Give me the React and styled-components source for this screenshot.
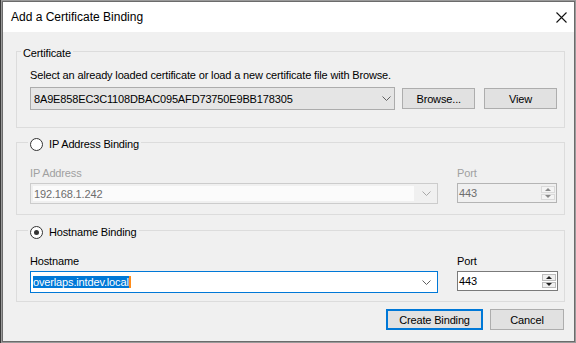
import styled, { createGlobalStyle } from "styled-components";

const GlobalStyle = createGlobalStyle`
  html, body {
    margin: 0;
    background: #8a8a8a;
  }
  body {
    font-family: "Liberation Sans", Arial, sans-serif;
    font-size: 11px;
    letter-spacing: -0.15px;
    color: #000;
  }
`;

const Desk = styled.div`
  width: 576px;
  height: 343px;
  padding: 1px 0 0 2px;
  box-sizing: border-box;
  background: linear-gradient(90deg, #3a3a3a 0 1px, #9a9a9a 1px);
  overflow: hidden;
`;

const Window = styled.div`
  width: 573px;
  height: 341px;
  box-sizing: border-box;
  border: 1px solid #6b6b6b;
  display: flex;
  flex-direction: column;
  background: #f0f0f0;
`;

const TitleBar = styled.div`
  height: 30px;
  background: #fff;
  display: flex;
  align-items: center;
  justify-content: space-between;
  padding: 0 7px 0 8px;
  font-size: 12px;
  letter-spacing: 0;
`;

const Body = styled.div`
  flex: 1;
  display: flex;
  flex-direction: column;
  padding: 10px 9px 0 13px;
`;

const Group = styled.fieldset`
  margin: 0 0 ${(p) => p.$gap || 0}px 0;
  padding: 0 7px ${(p) => p.$bottom}px 13px;
  border: 1px solid #dcdcdc;
  min-width: 0;
`;

const Legend = styled.legend`
  margin-left: ${(p) => p.$indent}px;
  padding: ${(p) => p.$drop || 0}px 2px 0 2px;
  line-height: 14px;
  display: flex;
  align-items: center;
  gap: 6px;
`;

const Radio = styled.span`
  width: 11px;
  height: 11px;
  border: 1px solid #333;
  border-radius: 50%;
  background: #fff;
  display: inline-flex;
  align-items: center;
  justify-content: center;

  &::after {
    content: "";
    width: 5px;
    height: 5px;
    border-radius: 50%;
    background: ${(p) => (p.$checked ? "#333" : "transparent")};
  }
`;

const Hint = styled.div`
  line-height: 14px;
  margin: ${(p) => p.$top}px 0 5px;
`;

const CertRow = styled.div`
  display: flex;
  align-items: center;
  gap: 7px;
`;

const Combo = styled.div`
  box-sizing: border-box;
  width: ${(p) => p.$w}px;
  height: ${(p) => p.$h}px;
  border: 1px solid ${(p) => p.$border};
  background: ${(p) => p.$bg};
  display: flex;
  align-items: center;
  padding: ${(p) => p.$pad || "0 0 0 3px"};
  color: ${(p) => p.$color || "#000"};
`;

const InnerField = styled.div`
  flex: 1;
  align-self: stretch;
  margin: 2px 0;
  background: #fbfbfb;
  display: flex;
  align-items: center;
  padding-left: 1px;
`;

const ComboText = styled.span`
  flex: 1;
  white-space: nowrap;
  overflow: hidden;
`;

const Chevron = styled.svg`
  width: 9px;
  height: 5px;
  margin: 0 ${(p) => p.$right}px 0 8px;
  flex: none;
`;

const Button = styled.button`
  box-sizing: border-box;
  width: ${(p) => p.$w}px;
  height: ${(p) => p.$h || 21}px;
  margin-left: ${(p) => p.$ml || 0}px;
  font: inherit;
  letter-spacing: inherit;
  color: #000;
  background: #e1e1e1;
  border: ${(p) => (p.$default ? "2px solid #0078d7" : "1px solid #adadad")};
  padding: 0;
`;

const FieldGrid = styled.div`
  display: grid;
  grid-template-columns: 408px ${(p) => p.$port}px;
  column-gap: 19px;
  row-gap: 3px;
  margin-top: ${(p) => p.$top}px;
`;

const Label = styled.div`
  line-height: 14px;
  color: ${(p) => (p.$disabled ? "#a0a0a0" : "#000")};
`;

const Spin = styled.div`
  box-sizing: border-box;
  height: ${(p) => p.$h}px;
  border: 1px solid ${(p) => (p.$disabled ? "#b4b4b4" : "#7a7a7a")};
  background: ${(p) => (p.$disabled ? "#f0f0f0" : "#fff")};
  display: flex;
  align-items: center;
  padding-left: 1px;
  color: ${(p) => (p.$disabled ? "#6d6d6d" : "#000")};
`;

const SpinButtons = styled.div`
  width: 14px;
  align-self: stretch;
  margin: 2px 1px 2px auto;
  display: flex;
  flex-direction: column;
  gap: 1px;
`;

const SpinArrow = styled.div`
  flex: 1;
  background: ${(p) => (p.$disabled ? "#f4f4f4" : "#f0f0f0")};
  border: 1px solid ${(p) => (p.$disabled ? "#dadada" : "#bcbcbc")};
  display: flex;
  align-items: center;
  justify-content: center;

  &::after {
    content: "";
    border-left: 3px solid transparent;
    border-right: 3px solid transparent;
    ${(p) => (p.$down ? "border-top" : "border-bottom")}: 3px solid
      ${(p) => (p.$disabled ? "#8a8a8a" : "#222")};
  }
`;

const Selected = styled.span`
  background: #0078d7;
  color: #fff;
  line-height: 14px;
  border-right: 2px solid #ff8c1a;
`;

const Actions = styled.div`
  display: flex;
  justify-content: flex-end;
  gap: 7px;
  margin: 0 1px 0 0;
`;

const ChevronIcon = ({ right = 5, color = "#606060" }) => (
  <Chevron $right={right} viewBox="0 0 9 5">
    <path d="M0.5 0.5 L4.5 4.5 L8.5 0.5" fill="none" stroke={color} strokeWidth="1" />
  </Chevron>
);

const CloseIcon = () => (
  <svg width="11" height="11" viewBox="0 0 11 11">
    <path d="M0.5 0.5 L10.5 10.5 M10.5 0.5 L0.5 10.5" stroke="#111" strokeWidth="1.1" />
  </svg>
);

const PortSpin = ({ disabled, h }) => (
  <Spin $disabled={disabled} $h={h}>
    443
    <SpinButtons>
      <SpinArrow $disabled={disabled} />
      <SpinArrow $disabled={disabled} $down />
    </SpinButtons>
  </Spin>
);

export default function App() {
  return (
    <>
      <GlobalStyle />
      <Desk>
        <Window>
          <TitleBar>
            <span>Add a Certificate Binding</span>
            <CloseIcon />
          </TitleBar>
          <Body>
            <Group $bottom={17} $gap={6}>
              <Legend $indent={-9} $drop={4}>Certificate</Legend>
              <Hint $top={8}>
                Select an already loaded certificate or load a new certificate file with Browse.
              </Hint>
              <CertRow>
                <Combo $w={366} $h={23} $border="#acacac" $bg="#e5e5e5">
                  <ComboText>8A9E858EC3C1108DBAC095AFD73750E9BB178305</ComboText>
                  <ChevronIcon right={3} />
                </Combo>
                <Button $w={73}>Browse...</Button>
                <Button $w={73} $ml={2}>View</Button>
              </CertRow>
            </Group>

            <Group $bottom={10} $gap={7}>
              <Legend $indent={-2} $drop={3}>
                <Radio />
                IP Address Binding
              </Legend>
              <FieldGrid $top={15} $port={100}>
                <Label $disabled>IP Address</Label>
                <Label $disabled>Port</Label>
                <Combo $w={408} $h={21} $border="#cccccc" $bg="#f0f0f0" $pad="0 0 0 2px" $color="#6d6d6d">
                  <InnerField>192.168.1.242</InnerField>
                  <ChevronIcon right={6} color="#a8a8a8" />
                </Combo>
                <PortSpin disabled h={20} />
              </FieldGrid>
            </Group>

            <Group $bottom={8} $gap={7}>
              <Legend $indent={-2} $drop={3}>
                <Radio $checked />
                Hostname Binding
              </Legend>
              <FieldGrid $top={15} $port={101}>
                <Label>Hostname</Label>
                <Label>Port</Label>
                <Combo $w={408} $h={22} $border="#0078d7" $bg="#fff" $pad="0 0 0 2px">
                  <ComboText>
                    <Selected>overlaps.intdev.local</Selected>
                  </ComboText>
                  <ChevronIcon right={6} />
                </Combo>
                <PortSpin h={20} />
              </FieldGrid>
            </Group>

            <Actions>
              <Button $w={97} $default>Create Binding</Button>
              <Button $w={74}>Cancel</Button>
            </Actions>
          </Body>
        </Window>
      </Desk>
    </>
  );
}
